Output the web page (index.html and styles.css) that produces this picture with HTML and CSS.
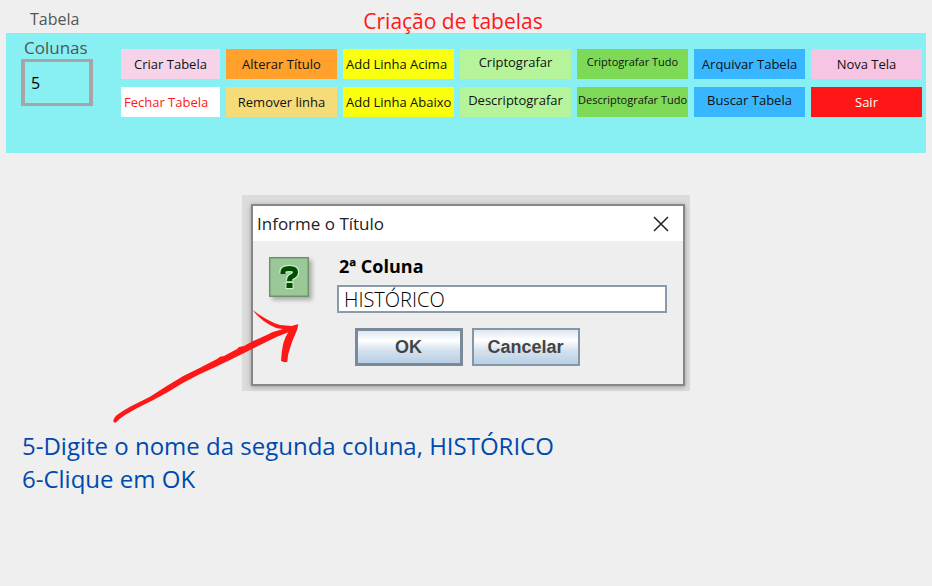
FILE: index.html
```html
<!DOCTYPE html>
<html lang="pt-BR">
<head>
<meta charset="utf-8">
<title>Criação de tabelas</title>
<link rel="stylesheet" href="styles.css">
</head>
<body>
<header class="top">
  <span class="top-label">Tabela</span>
  <h1 class="top-title">Criação de tabelas</h1>
</header>

<section class="panel">
  <div class="columns">
    <label class="columns-label" for="cols">Colunas</label>
    <input class="columns-input" id="cols" type="text" value="5">
  </div>
  <div class="actions">
    <button class="action pink" type="button">Criar Tabela</button>
    <button class="action orange" type="button">Alterar Título</button>
    <button class="action yellow start" type="button">Add Linha Acima</button>
    <button class="action mint raised" type="button">Criptografar</button>
    <button class="action green raised small" type="button">Criptografar Tudo</button>
    <button class="action blue" type="button">Arquivar Tabela</button>
    <button class="action rose" type="button">Nova Tela</button>
    <button class="action white start" type="button">Fechar Tabela</button>
    <button class="action sand" type="button">Remover linha</button>
    <button class="action yellow start" type="button">Add Linha Abaixo</button>
    <button class="action mint raised" type="button">Descriptografar</button>
    <button class="action green raised small" type="button">Descriptografar Tudo</button>
    <button class="action blue raised" type="button">Buscar Tabela</button>
    <button class="action red" type="button">Sair</button>
  </div>
</section>

<main class="stage">
  <div class="shade">
    <div class="dialog" role="dialog" aria-labelledby="dialog-title">
      <div class="dialog-bar">
        <h2 class="dialog-title" id="dialog-title">Informe o Título</h2>
        <button class="close" type="button" aria-label="Fechar">
          <svg width="18" height="18" viewBox="0 0 18 18"><path d="M2 2L16 16M16 2L2 16" fill="none" stroke="#222" stroke-width="1.5"/></svg>
        </button>
      </div>
      <div class="dialog-body">
        <svg class="question" width="40" height="40" viewBox="0 0 40 40" aria-hidden="true">
          <rect x="0.75" y="0.75" width="38.5" height="38.5" fill="#9ac898" stroke="#6c946b" stroke-width="1.5"/>
          <g fill="none" stroke="#c3f3bd" stroke-width="7.5"><path d="M14 16.500V15Q14 11.500 20.500 11.500Q26.500 11.500 26.500 15Q26.500 18 23 19.500Q20.500 20.500 20.500 23.500"/><path d="M16.500 28.500H24.500"/></g>
          <path d="M14 17V15Q14 11.500 20.500 11.500Q26.500 11.500 26.500 15Q26.500 18 23 19.500Q20.500 20.500 20.500 24" fill="none" stroke="#044b05" stroke-width="5"/>
          <rect x="17.500" y="26" width="6" height="5" fill="#044b05"/>
        </svg>
        <div class="field">
          <label class="field-label" for="titulo">2ª Coluna</label>
          <input class="field-input" id="titulo" type="text" value="HISTÓRICO">
        </div>
      </div>
      <div class="dialog-buttons">
        <button class="metal default" type="button">OK</button>
        <button class="metal" type="button">Cancelar</button>
      </div>
    </div>
    <svg class="arrow" width="190" height="118" viewBox="0 0 190 118" aria-hidden="true">
      <path fill="#ff1717" d="M1.300 110.700Q1.500 112.700 3 112.700Q5 112 7 109.500Q10 107 13 105L24.700 98.300L41.300 90L54.700 82.700L71.300 72.700L88 64L101.300 58L118 50L134.700 41.700L154.700 31.700Q165 26.500 176.300 22.300Q173 27 171.300 33.300Q169.500 41 169 50.700Q172 53 175.300 51.700Q175.500 45 178 38.300Q180 31 183 25Q186 19 186.300 14.300Q183 15 179.700 16L168 15Q161 13 154.700 9.300Q147 5 140.700 0Q145 6 151.300 10.700Q158 15.500 164.700 18.300L171.300 19Q162 21 154.700 25L139.700 31.700L132 36L127 37L125 39L112 46L108 46.700L105 49L88 57.700L71.300 66L54.700 76L38 86.700L18 96.700Q12 100 6.300 104Q2 107 1.300 110.700Z"/>
    </svg>
  </div>
</main>

<section class="steps">
  <p>5-Digite o nome da segunda coluna, HISTÓRICO</p>
  <p>6-Clique em OK</p>
</section>
</body>
</html>
```

FILE: styles.css
```css
* {
  box-sizing: border-box;
}

body {
  margin: 0;
  background: #efefef;
  color: #111;
  font-family: "Open Sans", "Noto Sans", sans-serif;
}

h1, h2, p {
  margin: 0;
  font-weight: 400;
}

button, input {
  font-family: inherit;
  border-radius: 0;
}

/* Heading row */
.top {
  display: grid;
  grid-template-columns: 1fr auto 1fr;
  height: 33px;
  padding: 8px 26px 0 30px;
}

.top-label {
  color: #545454;
  font-size: 16px;
  line-height: 22px;
}

.top-title {
  grid-column: 2;
  margin-right: 30px;
  color: #ff1717;
  font-size: 21px;
  line-height: 26px;
}

/* Toolbar */
.panel {
  display: flex;
  gap: 28px;
  min-height: 120px;
  margin: 0 6px;
  padding: 3px 4px 0 15px;
  background: #88eff3;
}

.columns {
  display: flex;
  flex: none;
  flex-direction: column;
  width: 72px;
}

.columns-label {
  padding-left: 3px;
  color: #545454;
  font-size: 17px;
  line-height: 23px;
}

.columns-input {
  width: 100%;
  height: 47px;
  padding: 0 6px;
  border: solid #a6a6a6;
  border-width: 3px 4px;
  background: transparent;
  color: #000;
  font-size: 16px;
}

.actions {
  display: grid;
  flex: 1;
  grid-template-columns: 99fr repeat(6, 111fr);
  grid-auto-rows: 30px;
  align-content: start;
  gap: 8px 6px;
  padding-top: 13px;
}

.action {
  min-width: 0;
  padding: 0 3px;
  border: 0;
  color: #111;
  font-size: 13px;
  line-height: 18px;
  white-space: nowrap;
}

.start { text-align: left; }
.raised { padding-bottom: 5px; }

.small {
  padding-inline: 1px;
  font-size: 11px;
}

.pink { background: #f6d3e8; }
.orange { background: #ffa12b; }
.yellow { background: #faff0d; }
.mint { background: #b5f49a; }
.green { background: #7ed957; }
.blue { background: #38b6ff; }
.rose { background: #f6c5e3; }
.white { background: #fff; color: #ff1717; }
.sand { background: #f5dc78; }
.red { background: #ff1717; color: #fff; }

/* Dialog */
.stage {
  display: flex;
  justify-content: center;
  padding: 42px 0 38px;
}

.shade {
  position: relative;
  width: 448px;
  padding: 9px 5px 5px 9px;
  background: #dcdcdc;
}

.dialog {
  border: 2px solid #868686;
  background: #eee;
  box-shadow: 0 1px 5px #999;
}

.dialog-bar {
  display: flex;
  align-items: center;
  justify-content: space-between;
  height: 35px;
  padding: 0 13px 0 4px;
  background: #fff;
}

.dialog-title {
  color: #222;
  font-size: 17px;
  line-height: 22px;
}

.close {
  display: flex;
  padding: 0;
  border: 0;
  background: none;
}

.dialog-body {
  display: flex;
  gap: 28px;
  padding: 13px 16px 0;
}

.question {
  flex: none;
  margin-top: 3px;
  filter: drop-shadow(3px 3px 2px #aaa);
}

.field {
  display: flex;
  flex: 1;
  flex-direction: column;
  gap: 7px;
}

.field-label {
  padding-left: 2px;
  color: #000;
  font-size: 18px;
  font-weight: 700;
  line-height: 24px;
}

.field-input {
  width: 100%;
  height: 28px;
  padding: 0 5px;
  border: 2px solid #8a9aaa;
  background: #fff;
  color: #000;
  font-size: 20px;
  font-weight: 300;
}

.dialog-buttons {
  display: flex;
  justify-content: center;
  gap: 9px;
  padding: 15px 2px 18px 0;
}

.metal {
  width: 108px;
  height: 38px;
  padding: 0;
  border: 2px solid #8496a8;
  background: linear-gradient(#dde8f2, #fff 30%, #d5e2ee 60%, #b8cfe5);
  color: #444;
  font-family: "Liberation Sans", Arial, sans-serif;
  font-size: 18px;
  font-weight: 700;
}

.default {
  border: 3px solid #7a8a99;
}

.arrow {
  position: absolute;
  top: 115px;
  left: -130px;
  overflow: visible;
}

/* Instructions */
.steps {
  padding: 0 22px;
  color: #004aad;
  font-size: 24px;
  line-height: 33px;
}
```
